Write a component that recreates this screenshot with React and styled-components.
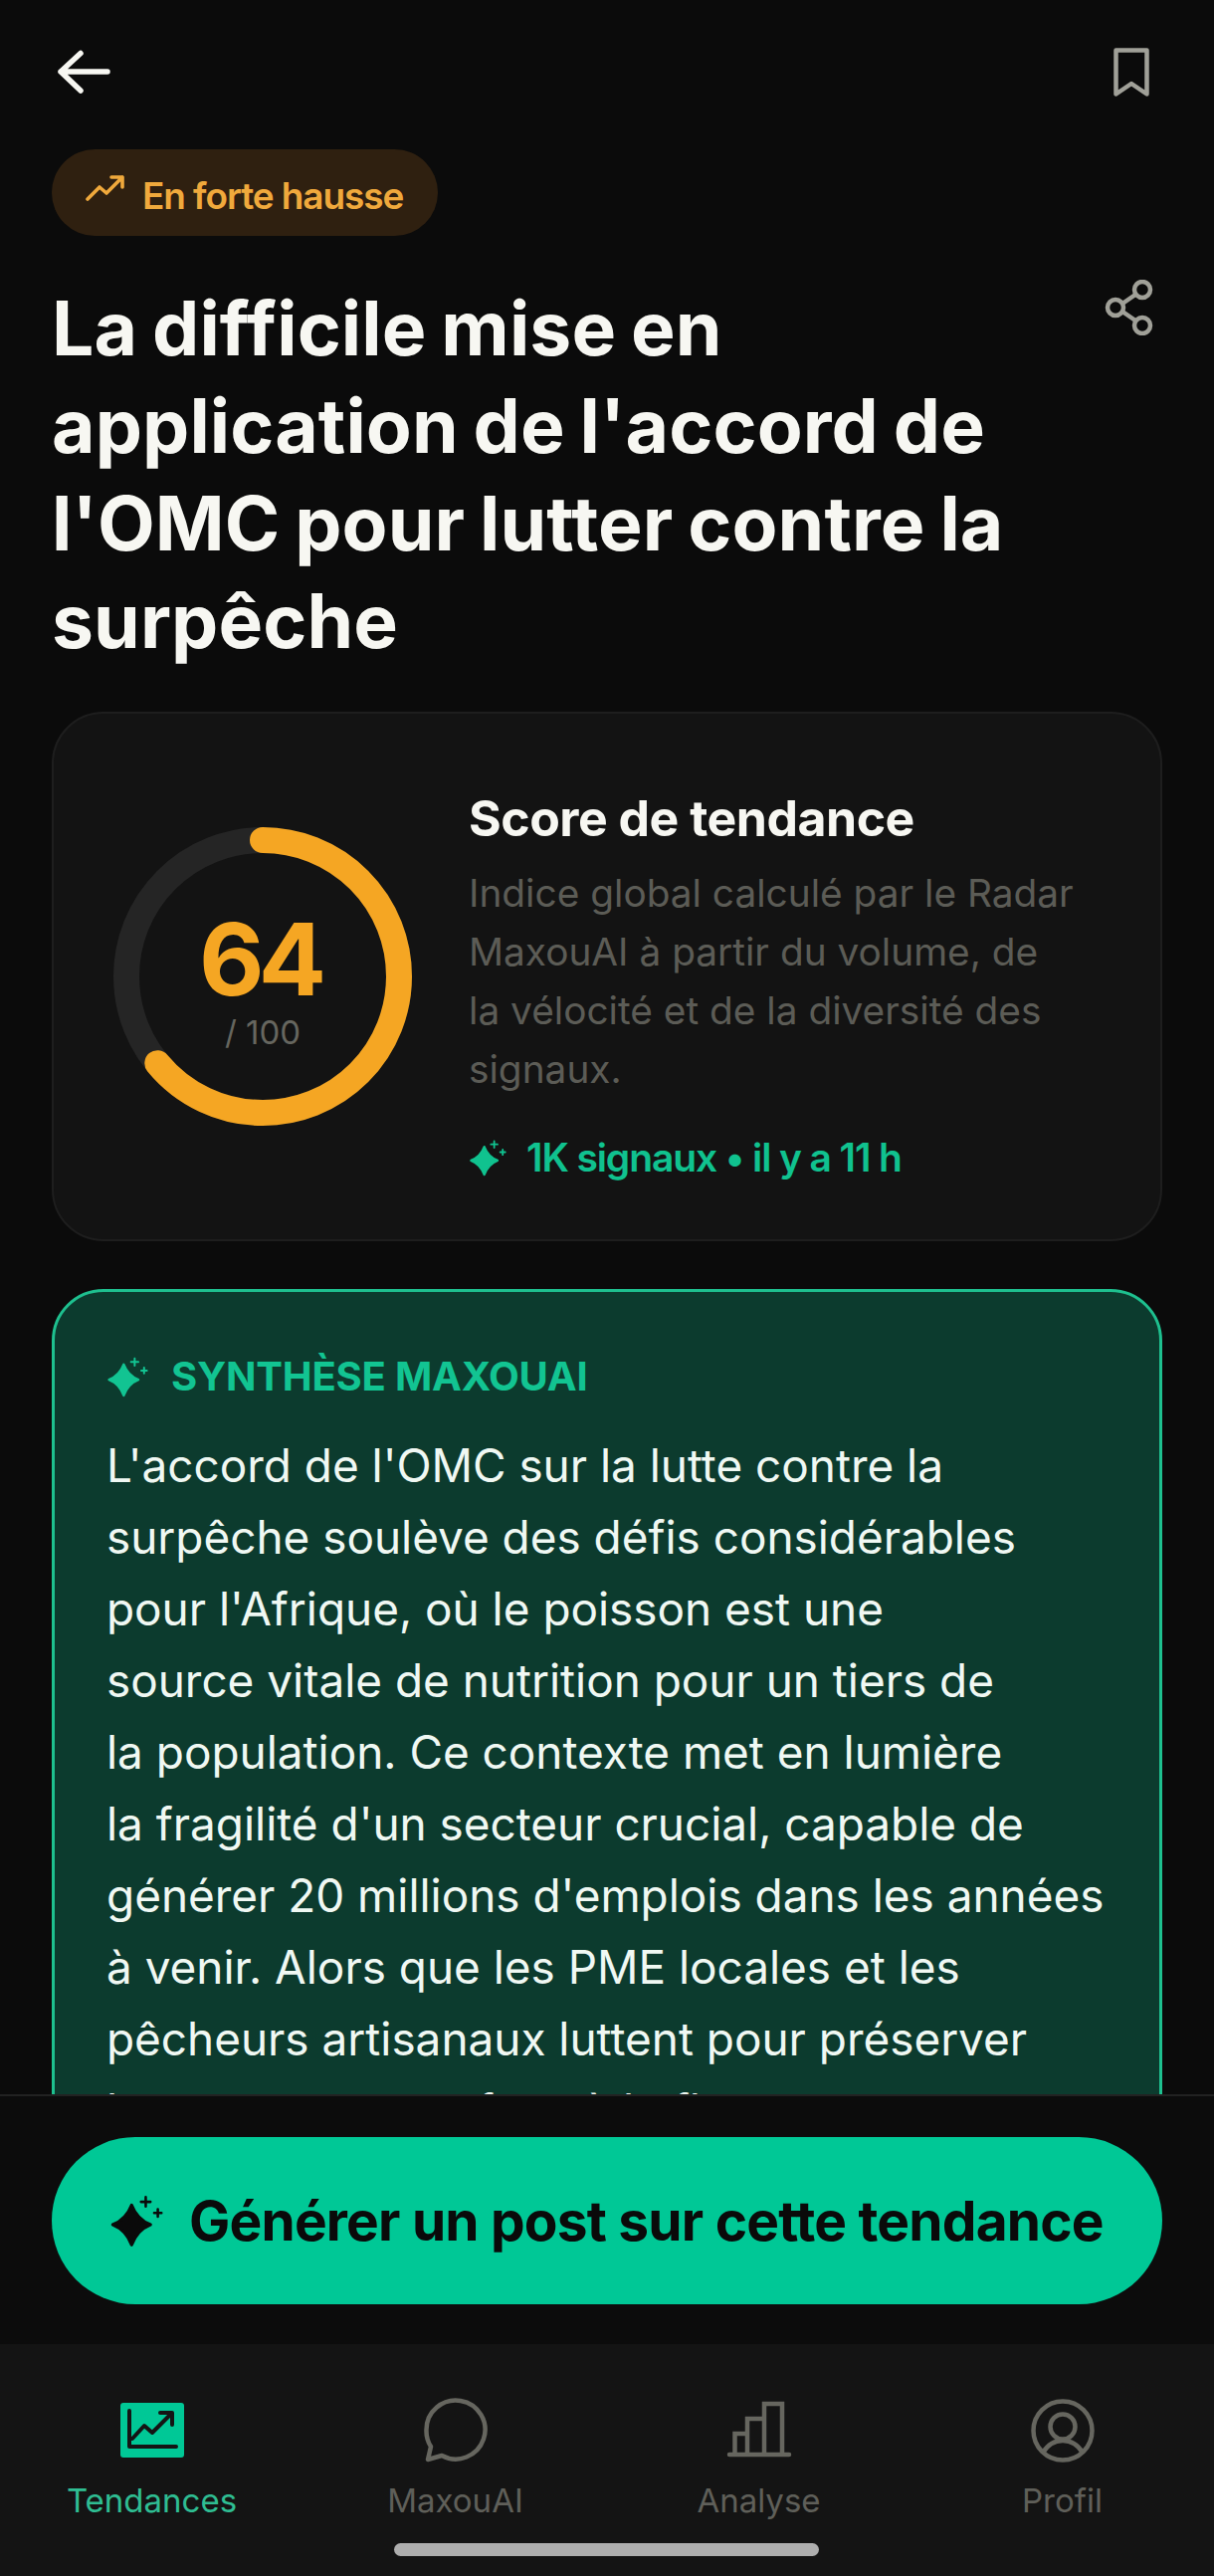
import React from "react";
import styled, { createGlobalStyle } from "styled-components";

const Global = createGlobalStyle`
  html, body { margin: 0; padding: 0; background: #0b0b0b; }
  * { box-sizing: border-box; }
`;
const DISPLAY = `"Inter", "Liberation Sans", sans-serif`;
const BODY = `"Inter", "Liberation Sans", sans-serif`;

const Screen = styled.div`
  width: 1220px; height: 2588px; display: flex; flex-direction: column;
  overflow: hidden; background: #0b0b0b; color: #f5f5f0; font-family: ${BODY};
`;
const Scroll = styled.main`
  flex: 0 0 2104px; height: 2104px; overflow: hidden; padding: 48px 52px 0;
`;
const TopBar = styled.header`
  display: flex; justify-content: space-between; align-items: flex-start; height: 102px;
`;
const BackIcon = styled.svg`width: 66px; height: 60px; display: block;`;
const BookIcon = styled.svg`width: 36px; height: 50px; margin-right: 13px; display: block;`;
const Pill = styled.div`
  display: inline-flex; align-items: center; gap: 17px; height: 87px; width: 388px; padding: 0 0 0 34px;
  border-radius: 44px; background: #2f2010; color: #f0a93c;
  font-family: ${DISPLAY}; font-size: 37px; font-weight: 600; letter-spacing: -1.1px;
`;
const PillLabel = styled.span`padding-top: 6px;`;
const PillIcon = styled.svg`width: 40px; height: 30px; margin-top: -8px;`;
const TitleRow = styled.div`
  display: flex; justify-content: space-between; align-items: flex-start; margin-top: 44px;
`;
const Title = styled.h1`
  margin: 0; font-family: ${DISPLAY}; font-size: 75px; line-height: 98px; font-weight: 700;
  letter-spacing: 0.1px; word-spacing: -3px; color: #f7f7f2; white-space: nowrap;
`;
const ShareIcon = styled.svg`width: 50px; height: 56px; margin: 0 8px 0 0; display: block;`;
const ScoreCard = styled.section`
  margin-top: 42px; height: 532px; border: 2px solid #1e1e1e; border-radius: 52px; background: #131313;
  display: flex; align-items: flex-start; padding: 0 0 0 60px;
`;
const Ring = styled.div`
  position: relative; width: 300px; height: 300px; margin-top: 114px; flex: none;
  display: flex; flex-direction: column; align-items: center;
`;
const RingSvg = styled.svg`position: absolute; inset: 0; width: 100%; height: 100%;`;
const Value = styled.div`
  font-family: ${DISPLAY}; margin-top: 90px; font-size: 101px; line-height: 84px; font-weight: 700;
  letter-spacing: -6px; color: #f5a623; padding-right: 6px;
`;
const Max = styled.div`font-size: 33px; line-height: 40px; margin-top: 12px; color: #66665f;`;
const ScoreText = styled.div`margin-left: 57px; padding-top: 75px;`;
const ScoreTitle = styled.h2`
  margin: 0; font-family: ${DISPLAY}; font-size: 50px; line-height: 60px; font-weight: 700;
  letter-spacing: -0.5px; color: #f7f7f2;
`;
const ScoreDesc = styled.p`
  margin: 15px 0 0; font-size: 38.8px; line-height: 59px; color: #5c5c56; white-space: pre-line;
`;
const Meta = styled.div`
  display: flex; align-items: center; gap: 20px; margin-top: 35px; color: #10c28f;
  font-family: ${DISPLAY}; font-size: 39px; line-height: 50px; font-weight: 600; letter-spacing: -1.1px;
`;
const Synth = styled.section`
  margin-top: 48px; border: 3px solid #1ec08f; border-radius: 52px; background: #0c3b2e;
  padding: 60px 52px 60px 52px;
`;
const SynthHead = styled.div`
  display: flex; align-items: center; gap: 23px; color: #12c492;
  font-family: ${DISPLAY}; font-size: 40px; line-height: 50px; font-weight: 700; letter-spacing: -0.2px;
`;
const SynthBody = styled.p`
  margin: 29px 0 0; font-size: 45.9px; line-height: 72px; color: #f0f8f3; white-space: pre-line;
`;
const Cta = styled.div`
  flex: 0 0 251px; border-top: 2px solid #222; background: #0c0c0c; padding: 41px 52px 0;
`;
const CtaButton = styled.button`
  width: 100%; height: 168px; border: 0; border-radius: 84px; background: #00c896; color: #0a0a0a;
  display: flex; align-items: center; gap: 26px; padding: 0 0 0 58px;
  font-family: ${DISPLAY}; font-size: 55px; font-weight: 700; letter-spacing: -0.8px; white-space: nowrap;
`;
const Nav = styled.nav`
  flex: 1; background: #141414; display: flex; flex-direction: column; position: relative;
`;
const Tabs = styled.div`
  display: grid; grid-template-columns: repeat(4, 305px);
`;
const Tab = styled.div`
  display: flex; flex-direction: column; align-items: center; padding-top: 54px;
  color: ${p => (p.$active ? "#2fbd92" : "#5f5f59")}; font-size: 33px; line-height: 44px;
`;
const TabIcon = styled.svg`width: 66px; height: 66px; display: block; margin-bottom: 15px;`;
const Home = styled.div`
  position: absolute; left: 396px; top: 200px; width: 427px; height: 13px; border-radius: 7px; background: #aeaeae;
`;

const Sparkle = ({ size, color }) => (
  <svg width={size} height={size} viewBox="0 0 40 40" style={{ flex: "none" }}>
    <path
      d="M16.500 8.500Q20.500 19 30.500 23 20.500 27 16.500 38 12.500 27 2.500 23 12.500 19 16.500 8.500z"
      fill={color} stroke={color} strokeWidth="2.400" strokeLinejoin="round"
    />
    <path d="M27 2.500v7M23.500 6h7M36 11.500v5.500M33.300 14.200h5.400" fill="none" stroke={color} strokeWidth="1.900" strokeLinecap="round" />
  </svg>
);

const lines = `L'accord de l'OMC sur la lutte contre la
surpêche soulève des défis considérables
pour l'Afrique, où le poisson est une
source vitale de nutrition pour un tiers de
la population. Ce contexte met en lumière
la fragilité d'un secteur crucial, capable de
générer 20 millions d'emplois dans les années
à venir. Alors que les PME locales et les
pêcheurs artisanaux luttent pour préserver
leurs ressources face à la flotte`;

export default function App() {
  return (
    <Screen>
      <Global />
      <Scroll>
        <TopBar>
          <BackIcon viewBox="0 0 66 60" fill="none" stroke="#f7f7f2" strokeWidth="5.500" strokeLinecap="round" strokeLinejoin="round">
            <path d="M29 5.500 9 24l20 19M9 24h47" />
          </BackIcon>
          <BookIcon viewBox="0 0 36 50" fill="none" stroke="#a0a098" strokeWidth="4.500" strokeLinejoin="round">
            <path d="M2.500 2.500h31v44L18 36 2.500 46.500z" />
          </BookIcon>
        </TopBar>
        <Pill>
          <PillIcon viewBox="0 0 40 30" fill="none" stroke="#f0a93c" strokeWidth="3.600" strokeLinecap="round" strokeLinejoin="round">
            <path d="M2 25 14 13l7 6L37 3M26 3h11v10" />
          </PillIcon>
          <PillLabel>En forte hausse</PillLabel>
        </Pill>
        <TitleRow>
          <Title>La difficile mise en<br />application de l'accord de<br />l'OMC pour lutter contre la<br />surpêche</Title>
          <ShareIcon viewBox="0 0 50 56" fill="none" stroke="#a0a098" strokeWidth="4.500">
            <circle cx="38" cy="10" r="8" />
            <circle cx="11" cy="28" r="8" />
            <circle cx="38" cy="46" r="8" />
            <path d="M18 24 31 15M18 32l13 9" />
          </ShareIcon>
        </TitleRow>
        <ScoreCard>
          <Ring>
            <RingSvg viewBox="0 0 300 300" fill="none">
              <circle cx="150" cy="150" r="137" stroke="#252525" strokeWidth="26" />
              <circle cx="150" cy="150" r="137" stroke="#f5a623" strokeWidth="26" strokeLinecap="round"
                strokeDasharray={`${2 * Math.PI * 137 * 0.64} ${2 * Math.PI * 137}`} transform="rotate(-90 150 150)" />
            </RingSvg>
            <Value>64</Value>
            <Max>/ 100</Max>
          </Ring>
          <ScoreText>
            <ScoreTitle>Score de tendance</ScoreTitle>
            <ScoreDesc>{`Indice global calculé par le Radar
MaxouAI à partir du volume, de
la vélocité et de la diversité des
signaux.`}</ScoreDesc>
            <Meta><Sparkle size={38} color="#10c28f" />1K signaux • il y a 11 h</Meta>
          </ScoreText>
        </ScoreCard>
        <Synth>
          <SynthHead><Sparkle size={42} color="#12c492" />SYNTHÈSE MAXOUAI</SynthHead>
          <SynthBody>{lines}</SynthBody>
        </Synth>
      </Scroll>
      <Cta>
        <CtaButton><Sparkle size={54} color="#0a0a0a" />Générer un post sur cette tendance</CtaButton>
      </Cta>
      <Nav>
        <Tabs>
          <Tab $active>
            <TabIcon viewBox="0 0 66 66" fill="none">
              <rect x="1" y="5" width="64" height="55" rx="3" fill="#00c896" />
              <path d="M10 13v36h47M13 41l12-13 8 7 18-18M41 15h12v12" stroke="#141414" strokeWidth="4" strokeLinecap="round" strokeLinejoin="round" />
            </TabIcon>
            Tendances
          </Tab>
          <Tab>
            <TabIcon viewBox="0 0 66 66" fill="none" stroke="#66665f" strokeWidth="4.500" strokeLinejoin="round">
              <path d="M3.500 32a29.500 29.500 0 1 1 15.500 26L5 62l3-13a29.500 29.500 0 0 1-4.500-17z" />
            </TabIcon>
            MaxouAI
          </Tab>
          <Tab>
            <TabIcon viewBox="0 0 66 66" fill="none" stroke="#66665f" strokeWidth="4.500" strokeLinecap="round">
              <path d="M8.500 57V36H21v21M21 57V21h17v36M38 57V6h18v51M3 57h60" />
            </TabIcon>
            Analyse
          </Tab>
          <Tab>
            <TabIcon viewBox="0 0 66 66" fill="none" stroke="#66665f" strokeWidth="4.500">
              <circle cx="33" cy="33" r="29.500" />
              <circle cx="33" cy="29" r="12.500" />
              <path d="M13 55c5-8 12-12 20-12s15 4 20 12" />
            </TabIcon>
            Profil
          </Tab>
        </Tabs>
        <Home />
      </Nav>
    </Screen>
  );
}
